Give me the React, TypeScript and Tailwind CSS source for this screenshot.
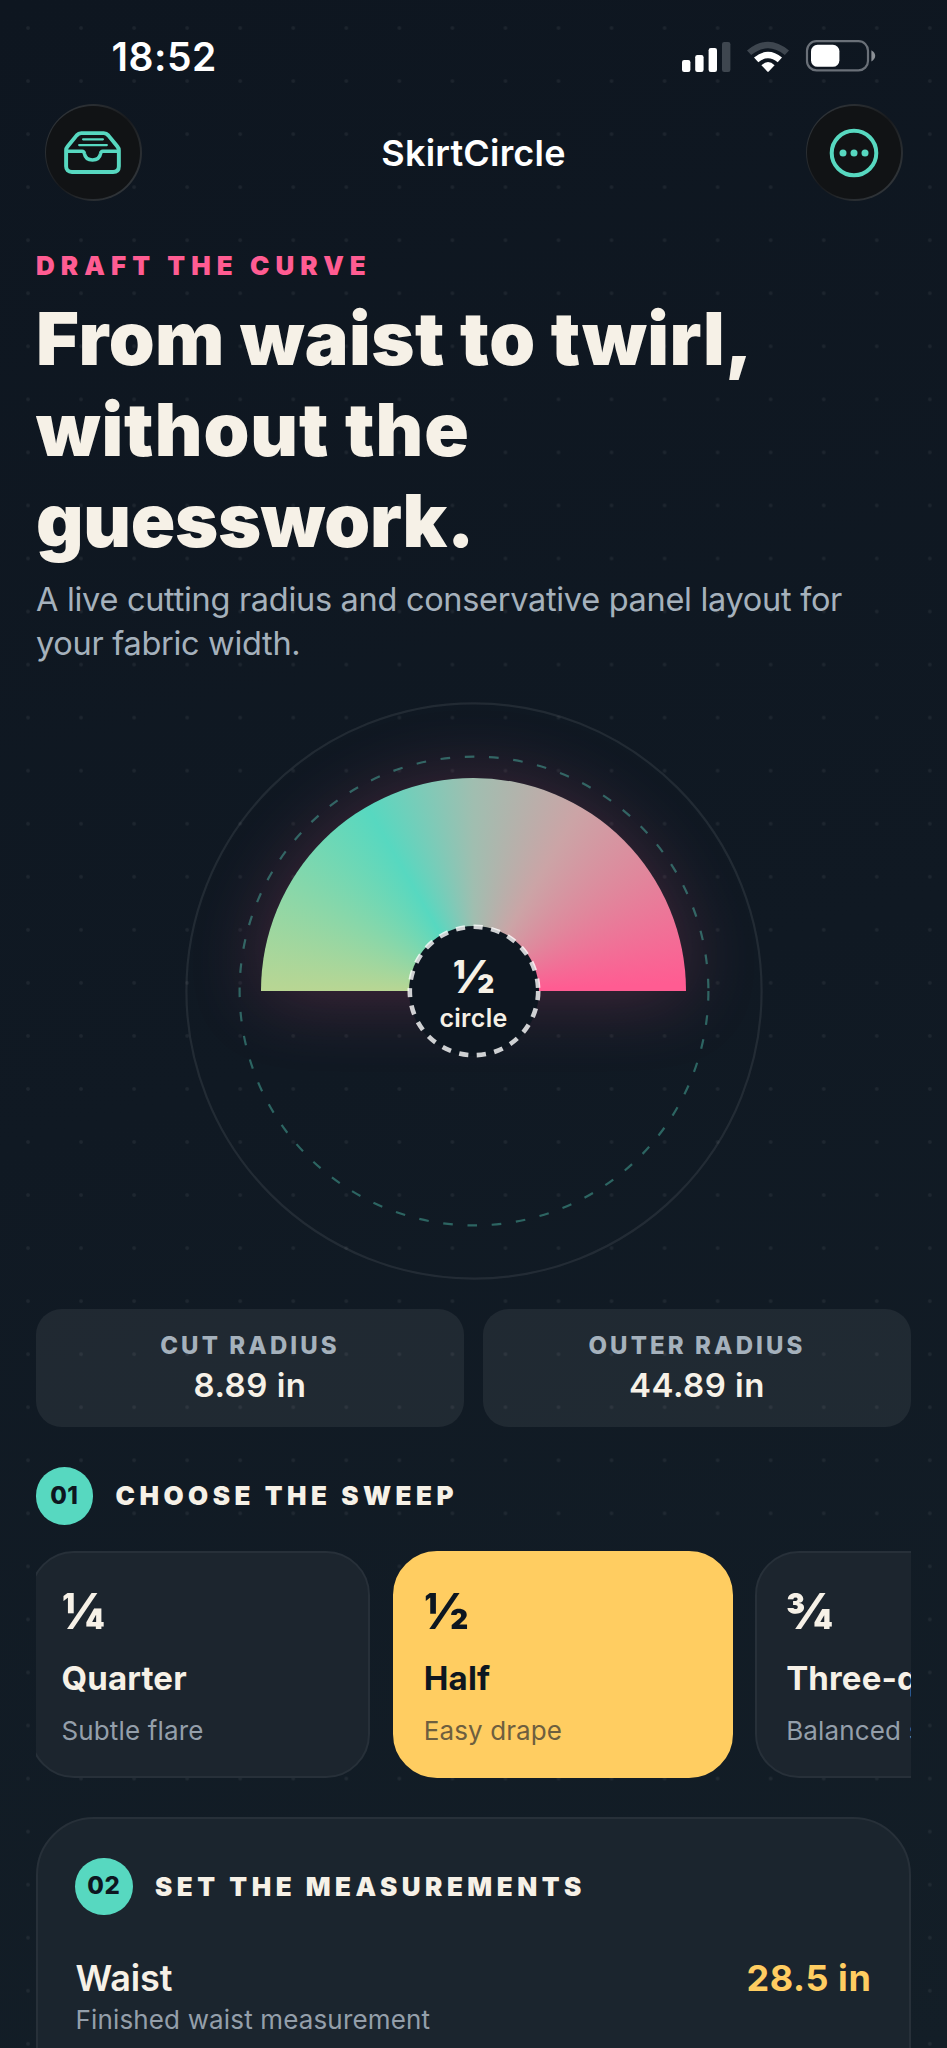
import React from "react";

const TEAL = "#57d8c0";

function StatusIcons() {
  return (
    <svg width="196" height="36" viewBox="0 0 196 36" fill="none">
      <rect x="2" y="21" width="8.4" height="12" rx="2.2" fill="#fff" />
      <rect x="15.2" y="16" width="8.4" height="17" rx="2.2" fill="#fff" />
      <rect x="28.6" y="9" width="8.4" height="24" rx="2.2" fill="#fff" />
      <rect x="42" y="3" width="8.4" height="30" rx="2.2" fill="#3e464f" />
      <path d="M67 11.5 Q88 -6 109 11.5 L104.8 16 Q88 2.6 71.2 16 Z" fill="#3e464f" />
      <path d="M74 18.6 Q88 7 102 18.6 L97.7 23.2 Q88 15.4 78.3 23.2 Z" fill="#fff" />
      <path d="M81.4 26.2 Q88 19.8 94.6 26.2 L88.7 32.6 Q88 33.2 87.3 32.6 Z" fill="#fff" />
      <rect x="127" y="2.2" width="61" height="29.2" rx="9.5" stroke="#6a7078" strokeWidth="2.2" />
      <rect x="131" y="5.8" width="28.4" height="22" rx="6.5" fill="#fff" />
      <path d="M191.4 11.2 Q195.2 13.4 195.2 16.8 T191.4 22.4 Z" fill="#8b9096" />
    </svg>
  );
}

function RoundButton({ children }: { children: React.ReactNode }) {
  return (
    <button className="size-[97px] rounded-full bg-[linear-gradient(135deg,#34393e_0%,#282c30_28%,#191b1e_50%,#282c30_72%,#383d42_100%)] p-[1.6px]">
      <span className="flex size-full items-center justify-center rounded-full bg-[#111315]">
        {children}
      </span>
    </button>
  );
}

function TrayIcon() {
  return (
    <svg width="60" height="45.5" viewBox="0 0 58 44" fill="none" stroke={TEAL} strokeLinecap="round" strokeLinejoin="round">
      <path
        d="M3 19.5 C3 18 3.6 17 4.6 15.8 L13.2 5.2 C14.4 3.8 15.6 3 17.6 3 H39.4 C41.4 3 42.6 3.8 43.8 5.2 L52.4 15.8 C53.4 17 54 18 54 19.5 V35 C54 38.6 52 40.6 48.4 40.6 H8.6 C5 40.6 3 38.6 3 35 Z"
        strokeWidth="3.8"
      />
      <path d="M4 20.6 H18.5 C19.8 20.6 20.4 21.4 20.6 22.6 C21.4 26.8 24.6 29 28.5 29 C32.4 29 35.6 26.8 36.4 22.6 C36.6 21.4 37.2 20.6 38.5 20.6 H53" strokeWidth="3.4" />
      <path d="M19.4 9 H38.6 M15.6 14.6 H42.4" strokeWidth="2.1" />
    </svg>
  );
}

function MoreIcon() {
  return (
    <svg width="50" height="50" viewBox="0 0 50 50" fill="none">
      <circle cx="25" cy="25" r="22.3" stroke={TEAL} strokeWidth="4" />
      <circle cx="14" cy="25" r="3.5" fill={TEAL} />
      <circle cx="25" cy="25" r="3.5" fill={TEAL} />
      <circle cx="36" cy="25" r="3.5" fill={TEAL} />
    </svg>
  );
}

function Dial() {
  return (
    <div className="relative mx-auto mt-[35.9px] size-[578px] shrink-0">
      <div className="absolute left-[76.5px] top-[76.7px] h-[212.5px] w-[425px] rounded-t-full bg-[conic-gradient(from_90deg_at_50%_100%,#ff5c92_0deg,#b9d693_180deg,#57d8c0_240deg,#a0beb0_270deg,#cba4a6_300deg,#e0879c_325deg,#ff5c92_358deg)] shadow-[0_5px_76px_rgba(255,92,146,0.24)]" />
      <svg className="absolute inset-0" width="578" height="578" viewBox="0 0 578 578" fill="none">
        <circle cx="289" cy="289" r="287.6" stroke="#fff" strokeOpacity="0.08" strokeWidth="2.2" />
        <circle cx="289" cy="289" r="234.4" stroke={TEAL} strokeOpacity="0.4" strokeWidth="2.2" strokeDasharray="9.7 14.63" />
        <circle cx="289" cy="289" r="65" fill="#0d1620" />
        <circle cx="289" cy="289" r="64.2" stroke="#fff" strokeOpacity="0.8" strokeWidth="4.6" strokeDasharray="9.2 8.54" />
      </svg>
      <div className="absolute inset-0 flex flex-col items-center pt-[250px] text-[#f6f1e7]">
        <span className="text-[46px] font-black leading-[48px]">½</span>
        <span className="mt-[3px] text-[25px] font-semibold leading-[30px] tracking-[0.3px]">circle</span>
      </div>
    </div>
  );
}

function Stat({ label, value }: { label: string; value: string }) {
  return (
    <div className="flex h-[118px] flex-1 flex-col items-center rounded-[26px] bg-white/[0.065] pt-[22px]">
      <span className="text-[24px] font-extrabold leading-[30px] tracking-[3.1px] text-[#a5b1bc]">{label}</span>
      <span className="mt-1 text-[33px] font-semibold leading-[40px] tracking-[0.5px] text-[#f6f1e7]">{value}</span>
    </div>
  );
}

function StepTitle({ step, title }: { step: string; title: string }) {
  return (
    <div className="flex h-[58px] items-center gap-[22.5px]">
      <span className="-ml-[0.5px] flex size-[57.5px] items-center justify-center rounded-full bg-[#57d8c0] text-[24px] font-extrabold tracking-[0.5px] text-[#0d1620]">
        {step}
      </span>
      <h2 className="text-[26px] font-black tracking-[4.5px] text-[#f6f1e7]">{title}</h2>
    </div>
  );
}

function SweepCard({ fraction, name, note, active = false }: { fraction: string; name: string; note: string; active?: boolean }) {
  return (
    <div
      className={
        active
          ? "h-[227px] w-[340px] shrink-0 rounded-[44px] border-2 border-[#ffcd61] bg-[#ffcd61] px-[29px] pt-[35px] text-[#0d1620]"
          : "h-[227px] w-[340px] shrink-0 rounded-[44px] border-2 border-[#273039] bg-[#1c252e] px-[29px] pt-[35px] text-[#f6f1e7]"
      }
    >
      <div className="text-[49px] font-black leading-[48px]">{fraction}</div>
      <div className="mt-[22px] whitespace-nowrap text-[33px] font-bold leading-[40px] tracking-[0.15px]">{name}</div>
      <div
        className={
          active
            ? "mt-[17px] whitespace-nowrap text-[26px] leading-[32px] tracking-[0.1px] text-[#6e5f3f]"
            : "mt-[17px] whitespace-nowrap text-[26px] leading-[32px] tracking-[0.15px] text-[#949faa]"
        }
      >
        {note}
      </div>
    </div>
  );
}

export default function App() {
  return (
    <div className="h-[2048px] w-[947px] overflow-hidden bg-[linear-gradient(165deg,#0e1620_0%,#101923_50%,#131e27_100%)] font-['Inter','Liberation_Sans',sans-serif]">
      <div className="flex h-full flex-col bg-[radial-gradient(circle_at_center,rgba(255,255,255,0.06)_1.3px,transparent_2.4px)] bg-[length:53.05px_53.05px] bg-[position:1.5px_1.5px]">
        <div className="flex h-[104px] shrink-0 items-start justify-between pl-[111.5px] pr-[71px] pt-[39px]">
          <span className="text-[39px] font-semibold leading-[36px] tracking-[0.5px] text-white">18:52</span>
          <StatusIcons />
        </div>

        <header className="flex h-[97px] shrink-0 items-center justify-between px-[44.5px]">
          <RoundButton>
            <TrayIcon />
          </RoundButton>
          <h1 className="pt-px text-[36px] font-semibold tracking-[0.2px] text-white">SkirtCircle</h1>
          <RoundButton>
            <MoreIcon />
          </RoundButton>
        </header>

        <main className="flex flex-col px-9">
          <p className="mt-[50px] text-[26px] font-black leading-[30px] tracking-[6.05px] text-[#ff5c92]">DRAFT THE CURVE</p>
          <h2 className="mt-[13.3px] flex flex-col text-[73.5px] font-black leading-[90.7px] text-[#f6f1e7]">
            <span className="tracking-[0.5px]">From waist to twirl,</span>
            <span className="tracking-[0.95px]">without the</span>
            <span className="tracking-[-0.3px]">guesswork.</span>
          </h2>
          <p className="mt-[11.5px] whitespace-nowrap text-[32.5px] leading-[44px] tracking-[-0.3px] text-[#a5b1bc]">
            A live cutting radius and conservative panel layout for
            <br />
            your fabric width.
          </p>

          <Dial />

          <div className="mt-[29.2px] flex gap-[19px]">
            <Stat label="CUT RADIUS" value="8.89 in" />
            <Stat label="OUTER RADIUS" value="44.89 in" />
          </div>

          <section className="mt-10">
            <StepTitle step="01" title="CHOOSE THE SWEEP" />
            <div className="mt-[26px] overflow-hidden">
              <div className="-ml-[5.6px] flex gap-[22.4px]">
                <SweepCard fraction="¼" name="Quarter" note="Subtle flare" />
                <SweepCard fraction="½" name="Half" note="Easy drape" active />
                <SweepCard fraction="¾" name="Three-quarter" note="Balanced sweep" />
              </div>
            </div>
          </section>

          <section className="mt-[39px] h-[320px] rounded-[58px] border-2 border-[#273039] bg-[#1b252e] px-[37.5px] pt-[38.5px]">
            <StepTitle step="02" title="SET THE MEASUREMENTS" />
            <div className="mt-[41px] flex items-center justify-between text-[36px] leading-[44px]">
              <span className="font-semibold tracking-[-0.1px] text-[#f6f1e7]">Waist</span>
              <span className="font-bold tracking-[0.6px] text-[#ffcd61]">28.5 in</span>
            </div>
            <p className="mt-1 text-[26px] leading-[32px] tracking-[0.15px] text-[#949faa]">Finished waist measurement</p>
          </section>
        </main>
      </div>
    </div>
  );
}
